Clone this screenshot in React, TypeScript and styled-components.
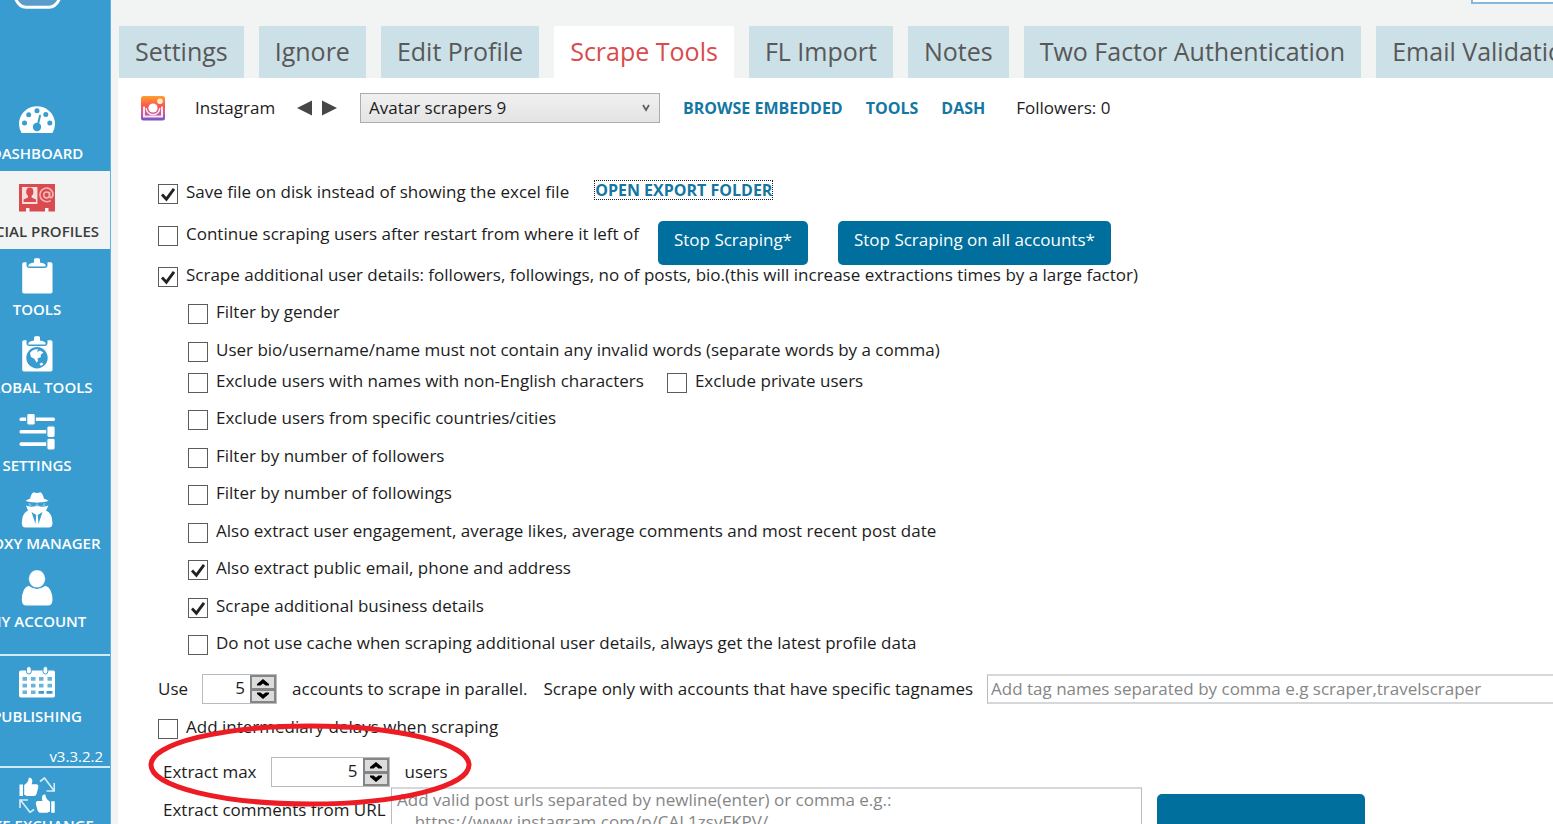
import React, { useState } from "react";
import type { ReactNode } from "react";
import styled, { createGlobalStyle, css } from "styled-components";

const color = {
  rail: "#389cd0",
  railEdge: "#5db4e0",
  page: "#f2f4f4",
  tab: "#cce0e7",
  tabText: "#585858",
  accent: "#d94b4e",
  action: "#006f9e",
  link: "#1477a3",
  text: "#1c1c1c",
  border: "#b9bbc0",
  softBorder: "#d6d7db",
};

const GlobalStyle = createGlobalStyle`
  *, *::before, *::after { box-sizing: border-box; }
  body {
    margin: 0;
    background: ${color.page};
    color: ${color.text};
    font: 17px/24px "Open Sans", "Noto Sans", sans-serif;
  }
  button, input, select, textarea { font: inherit; color: inherit; margin: 0; border-radius: 0; }
`;

/* ---------- shell ---------- */

const Shell = styled.div`
  display: flex;
  height: 100vh;
  overflow: hidden;
`;

const Rail = styled.nav`
  flex: none;
  width: 111px;
  overflow: hidden;
  background: ${color.rail};
  border-right: 1px solid ${color.railEdge};
`;

const RailTrack = styled.div`
  display: flex;
  flex-direction: column;
  width: 148px;
  margin-left: -37px;
`;

const LogoSlot = styled.div`
  display: flex;
  justify-content: center;
  height: 93px;
`;

const RailItem = styled.a<{ $active?: boolean; $tight?: boolean }>`
  display: flex;
  flex-direction: column;
  align-items: center;
  gap: ${(p) => (p.$tight ? 2 : 5)}px;
  height: 78px;
  padding-top: 9px;
  color: ${(p) => (p.$active ? "#3c3c3c" : "#fff")};
  background: ${(p) => (p.$active ? color.page : "transparent")};
  font-size: 15px;
  font-weight: 600;
  line-height: 20px;
  white-space: nowrap;
  text-decoration: none;
  svg { flex: none; }
`;

const RailGroup = styled.div<{ $top: number }>`
  margin-top: ${(p) => p.$top}px;
  border-top: 2px solid #d3eaf5;
`;

const Version = styled.div`
  padding: 12px 8px 0 0;
  color: #fff;
  font-size: 15px;
  line-height: 20px;
  text-align: right;
`;

const Main = styled.main`
  flex: 1;
  min-width: 0;
  overflow: hidden;
  padding-left: 7px;
  display: flex;
  flex-direction: column;
`;

const TopBar = styled.header`
  display: flex;
  flex: none;
  justify-content: flex-end;
  align-items: flex-end;
  height: 26px;
  padding-bottom: 22px;
`;

const TopInput = styled.input`
  width: 82px;
  height: 28px;
  border: 2px solid #88b9dc;
  border-right: 0;
  background: #fff;
`;

const Tabs = styled.div`
  display: flex;
  flex: none;
  gap: 15px;
  height: 52px;
  padding-left: 1px;
`;

const Tab = styled.button<{ $active?: boolean }>`
  flex: none;
  padding: 0 16px 2px;
  border: 0;
  background: ${(p) => (p.$active ? "#fff" : color.tab)};
  color: ${(p) => (p.$active ? color.accent : color.tabText)};
  font-size: 25px;
  line-height: 34px;
  white-space: nowrap;
`;

const Panel = styled.section`
  flex: 1 0 auto;
  background: #fff;
`;

/* ---------- account bar ---------- */

const AccountBar = styled.div`
  display: flex;
  align-items: center;
  height: 60px;
  padding-left: 22px;
  white-space: nowrap;
`;

const Network = styled.span`
  width: 79px;
  margin: 0 23px 0 29px;
`;

const Stepper = styled.div`
  display: flex;
  gap: 10px;
  margin-right: 23px;
`;

const ArrowButton = styled.button`
  display: flex;
  padding: 0;
  border: 0;
  background: none;
`;

const SelectWrap = styled.div`
  position: relative;
  width: 300px;
  margin-right: 23px;
  svg { position: absolute; right: 10px; top: 11px; pointer-events: none; }
`;

const AccountSelect = styled.select`
  display: block;
  width: 100%;
  height: 30px;
  padding: 0 8px;
  appearance: none;
  border: 1px solid #acacac;
  background: linear-gradient(#f0f0f0, #e4e4e4);
`;

const TextLink = styled.a<{ $focused?: boolean }>`
  color: ${color.link};
  font-size: 16px;
  font-weight: 700;
  line-height: 18px;
  text-decoration: none;
  white-space: nowrap;
  ${(p) => p.$focused && css`
    display: block;
    outline: 1px dotted #222;
  `}
`;

const BarLinks = styled.div`
  display: flex;
  gap: 23px;
  margin-right: 31px;
`;

/* ---------- form ---------- */

const Form = styled.form`
  display: flex;
  flex-direction: column;
  padding: 42px 0 0 40px;
`;

const Line = styled.div<{ $height: number }>`
  display: flex;
  align-items: flex-start;
  height: ${(p) => p.$height}px;
  white-space: nowrap;
`;

const CheckLabel = styled.label`
  display: flex;
  gap: 8px;
  line-height: 24px;
`;

const Box = styled.span`
  position: relative;
  flex: none;
  width: 20px;
  height: 20px;
  margin-top: 4px;
  svg { position: absolute; inset: 0; pointer-events: none; }
`;

const BoxInput = styled.input`
  display: block;
  width: 20px;
  height: 20px;
  appearance: none;
  border: 1px solid #5c5c5c;
  background: #fff;
`;

const SubOptions = styled.div`
  padding-left: 30px;
`;

const ExportSlot = styled.div`
  margin: 1px 0 0 26px;
`;

const Actions = styled.div`
  display: flex;
  gap: 30px;
  margin: -1px 0 0 19px;
`;

const ActionButton = styled.button`
  height: 44px;
  padding: 0 16px 6px;
  border: 0;
  border-radius: 5px;
  background: ${color.action};
  color: #fff;
`;

const Field = styled.div<{ $top: number; $indent?: number }>`
  position: relative;
  display: flex;
  align-items: center;
  height: 30px;
  margin-top: ${(p) => p.$top}px;
  padding-left: ${(p) => p.$indent ?? 0}px;
  white-space: nowrap;
`;

const NumberBox = styled.div<{ $width: number }>`
  display: flex;
  width: ${(p) => p.$width}px;
  height: 30px;
  margin: 0 15px 0 14px;
  border: 1px solid ${color.border};
  background: #fff;
`;

const NumberInput = styled.input`
  flex: 1;
  min-width: 0;
  padding: 0 5px 2px 0;
  border: 0;
  background: none;
  text-align: right;
  appearance: textfield;
  &::-webkit-inner-spin-button { appearance: none; }
`;

const SpinColumn = styled.div`
  display: flex;
  flex-direction: column;
  width: 26px;
`;

const SpinButton = styled.button`
  display: flex;
  flex: 1;
  align-items: center;
  justify-content: center;
  padding: 0;
  border: 2px solid #858585;
  background: #dcdcdc;
  & + & { border-top-width: 1px; }
`;

const TagLabel = styled.label`
  margin: 0 14px 0 16px;
`;

const TagInput = styled.input`
  flex: 1;
  min-width: 0;
  height: 30px;
  padding: 0 3px 2px;
  border: 2px solid ${color.softBorder};
  border-width: 2px 0 2px 1px;
  border-left-color: ${color.border};
  &::placeholder { color: #868686; opacity: 1; }
`;

const CommentsRow = styled.div`
  display: flex;
  align-items: flex-start;
  padding-left: 5px;
  white-space: nowrap;
`;

const CommentsLabel = styled.label`
  width: 228px;
  padding-top: 11px;
`;

const UrlArea = styled.textarea`
  width: 751px;
  height: 90px;
  margin-right: 15px;
  padding: 0 5px;
  resize: none;
  border: 1px solid ${color.border};
  border-top: 2px solid ${color.softBorder};
  line-height: 22px;
  &::placeholder { color: #868686; opacity: 1; }
`;

const WideAction = styled(ActionButton)`
  width: 208px;
  margin-top: 7px;
`;

const Highlight = styled.svg`
  position: absolute;
  left: -11px;
  top: -36px;
  pointer-events: none;
`;

/* ---------- icons ---------- */

const Icon = ({ children }: { children: ReactNode }) => (
  <svg width="36" height="36" viewBox="0 0 36 36" fill="#fff" aria-hidden="true">{children}</svg>
);

const DashboardIcon = () => (
  <Icon>
    <path d="M2.6 31A18 17.6 0 1 1 33.4 31Z" />
    <g fill={color.rail}>
      <circle cx="5.5" cy="21" r="2.5" /><circle cx="9.7" cy="12.7" r="2.5" />
      <circle cx="18" cy="8.8" r="2.5" /><circle cx="26.8" cy="12.5" r="2.5" />
      <circle cx="30.8" cy="21" r="2.5" /><circle cx="18" cy="25" r="4.2" />
    </g>
    <path d="M18.6 24L21 13.8" stroke={color.rail} strokeWidth="2" strokeLinecap="round" />
  </Icon>
);

const ProfilesIcon = () => (
  <Icon>
    <path fill={color.accent} d="M0 4H36V31.5H29.5V28H26V31.5H10.5V28H7V31.5H0Z" />
    <path fill="#f7dede" d="M3 7H18.4V24H3Z" />
    <ellipse cx="10.8" cy="11.8" rx="3.6" ry="4.3" fill={color.accent} />
    <path fill={color.accent} d="M9 14H12.6V17.5L17 19.5V22H4.6V19.5L9 17.5Z" />
    <g fill="none" stroke="#f2b9ba" strokeWidth="1.5">
      <circle cx="27.6" cy="15" r="2.9" />
      <path d="M30.6 11.8V16.6Q31.2 18.5 33 17.2Q35 14.5 33.2 11.3Q30.5 7.6 26.3 8.2Q21.2 9.5 20.9 14.8Q21.3 20.5 26.8 21.6Q29.5 21.9 31.7 20.7" />
    </g>
  </Icon>
);

const Clipboard = () => (
  <>
    <rect x="3.2" y="4.3" width="30.3" height="31.2" rx="1.8" />
    <path fill={color.rail} d="M7.5 4H28.5V7Q28.5 10 25.5 10H10.5Q7.5 10 7.5 7Z" />
    <path d="M9.3 8.4Q9.3 5.5 12.8 5L15 4.5V1.5Q15 0 18 0T21 1.5V4.5L23.2 5Q26.7 5.5 26.7 8.4Z" />
  </>
);

const ToolsIcon = () => <Icon><Clipboard /></Icon>;

const GlobalToolsIcon = () => (
  <Icon>
    <Clipboard />
    <circle cx="18" cy="21.7" r="10.7" fill={color.rail} />
    <path d="M11 17Q14 12.8 19 13.3L18 16L21 14.5L24.5 16.5L21.5 19L22 21L18.5 22.5L19 25L17.5 26.5L15.5 23L12 21Z" />
    <path d="M20.5 28L22.5 26.5L24.5 28L22 30Z" />
  </Icon>
);

const SettingsIcon = () => (
  <Icon>
    <rect x=".5" y="3.4" width="35.5" height="3.6" rx="1.6" />
    <rect x=".5" y="15.9" width="35" height="3.6" rx="1.6" />
    <rect x=".5" y="28.3" width="35" height="3.6" rx="1.6" />
    <g stroke={color.rail} strokeWidth="1.2">
      <rect x="7.7" y="-.6" width="8.6" height="11.8" rx="2" />
      <rect x="27.8" y="11.8" width="8.4" height="11.8" rx="2" />
      <rect x="27.8" y="24.2" width="8.4" height="11.8" rx="2" />
    </g>
  </Icon>
);

const ProxyIcon = () => (
  <Icon>
    <path d="M6.5 9Q9 7.3 11 6.8Q12 2 14.5 .2Q16.3 1 18 1T21.5 .2Q24 2 25 6.8Q27 7.3 29.7 9Q24 10.8 18 10.8T6.5 9Z" />
    <path d="M9.5 11Q18 12.6 26.5 11L26 14.5H10Z" opacity=".35" />
    <path d="M7 13.5L12 15L18 14L24 15L29.5 13.5L27 18.5Q33.3 21 33.5 31Q33.5 35.6 29.5 35.6H6.5Q2.8 35.6 2.8 31Q3 21 9 18.5Z" />
    <path fill={color.rail} d="M11.5 10.8H17V13L14.5 14.2L12 13ZM19 10.8H24.5L24 13L21.5 14.2L19 13ZM12.5 20L17.2 23L16.5 32ZM23.5 20L18.8 23L19.5 32Z" />
  </Icon>
);

const AccountIcon = () => (
  <Icon>
    <path d="M9.5 15.8Q18 22 26.5 15.8Q33.3 18 33.5 30Q33.5 35.6 28.5 35.6H7.5Q2.8 35.6 2.8 30Q3 18 9.5 15.8Z" />
    <ellipse cx="18" cy="8.8" rx="8.4" ry="9" stroke={color.rail} strokeWidth=".6" />
  </Icon>
);

const CalendarIcon = () => (
  <Icon>
    <rect x="0" y="5.5" width="36" height="27" rx="1.8" />
    <g stroke={color.rail} strokeWidth="1">
      <rect x="7.5" y="1.5" width="4.8" height="7.5" rx="2.4" />
      <rect x="24" y="1.5" width="4.8" height="7.5" rx="2.4" />
    </g>
    <path fill="#69b4dc" d="M3.5 12H8V15.7H3.5ZM12 12H16.5V15.7H12ZM20 12H24.5V15.7H20ZM28.5 12H33V15.7H28.5ZM3.5 18.7H8V22.4H3.5ZM12 18.7H16.5V22.4H12ZM20 18.7H24.5V22.4H20ZM28.5 18.7H33V22.4H28.5ZM3.5 25.5H8V29H3.5ZM12 25.5H16.5V29H12Z" />
    <path fill={color.rail} d="M19.5 26H25V28.7H19.5ZM27.5 26H33.5V28.7H27.5Z" />
  </Icon>
);

const ExchangeIcon = () => (
  <Icon>
    <path d="M.5 7.5H4V19H.5ZM5.2 8Q9.5 5.5 9.8 .8Q13.5 .3 13.3 4.8L12.7 7.3H18Q20 8 19.3 10.5L17.5 17Q17 19 15 19H8L5.2 17.8Z" />
    <path d="M35.7 24.3H32.2V35.8H35.7ZM31 24.8Q26.7 22.3 26.4 17.6Q22.7 17.1 22.9 21.6L23.5 24.1H18.2Q16.2 24.8 16.9 27.3L18.7 33.8Q19.2 35.8 21.2 35.8H28.2L31 34.6Z" />
    <path fill="none" stroke="#d9edf7" strokeWidth="1.6" d="M21 4.5L25.5 1L34.5 13M35.3 6V14H27.5M15 32.5L11 35.3L1.8 23.5M1 31V23H9" />
  </Icon>
);

const Logo = () => (
  <svg width="56" height="10" viewBox="0 0 56 10" aria-hidden="true">
    <path d="M5 -5Q9 7.2 17 7.2H40Q48 7.2 52 -5" fill="#5a9ccb" stroke="#fff" strokeWidth="3" />
  </svg>
);

const InstagramIcon = () => (
  <svg width="26" height="26" viewBox="0 0 26 26" aria-hidden="true">
    <defs>
      <linearGradient id="insta" x1="0" y1="0" x2="0" y2="1">
        <stop offset="0" stopColor="#fda02c" /><stop offset=".4" stopColor="#f9574f" />
        <stop offset=".7" stopColor="#cf5a9c" /><stop offset="1" stopColor="#6b57c9" />
      </linearGradient>
    </defs>
    <rect x="1" y="1" width="24" height="24.5" rx="2.5" fill="url(#insta)" />
    <path d="M4 11.5V21.5H22V11.5" fill="none" stroke="#fbe6ee" strokeWidth="2" />
    <path d="M6.2 13A6.8 6.8 0 0 0 19.8 13" fill="none" stroke="#fbe6ee" strokeWidth="1.4" />
    <circle cx="13" cy="13" r="4.6" fill="#fff" />
    <circle cx="20" cy="6.3" r="2.8" fill="#ffe9d2" />
  </svg>
);

const Triangle = ({ left }: { left?: boolean }) => (
  <svg width="15" height="16" viewBox="0 0 15 16" fill="#474747" aria-hidden="true">
    <path d={left ? "M15 .5V15.5L0 8Z" : "M0 .5V15.5L15 8Z"} />
  </svg>
);

/* ---------- controls ---------- */

const Check = ({ label, on = false }: { label: string; on?: boolean }) => {
  const [checked, setChecked] = useState(on);
  return (
    <CheckLabel>
      <Box>
        <BoxInput type="checkbox" checked={checked} onChange={(e) => setChecked(e.target.checked)} />
        {checked && (
          <svg width="20" height="20" viewBox="0 0 20 20" aria-hidden="true">
            <path d="M4 10.5L8.4 15.2L16 4.8" fill="none" stroke="#222" strokeWidth="2.8" />
          </svg>
        )}
      </Box>
      {label}
    </CheckLabel>
  );
};

const NumberField = ({ id, width }: { id: string; width: number }) => {
  const [value, setValue] = useState(5);
  return (
    <NumberBox $width={width}>
      <NumberInput id={id} type="number" value={value} onChange={(e) => setValue(Number(e.target.value))} />
      <SpinColumn>
        <SpinButton type="button" aria-label="Increase" onClick={() => setValue(value + 1)}>
          <svg width="12" height="7" viewBox="0 0 12 7"><path d="M0 6.5V5L6 0L12 5V6.5H8.500L6 4.500L3.500 6.500Z" /></svg>
        </SpinButton>
        <SpinButton type="button" aria-label="Decrease" onClick={() => setValue(value - 1)}>
          <svg width="12" height="7" viewBox="0 0 12 7"><path d="M0 .5V2L6 7L12 2V.5H8.5L6 2.5L3.5 .5Z" /></svg>
        </SpinButton>
      </SpinColumn>
    </NumberBox>
  );
};

const railItems = [
  { label: "DASHBOARD", icon: <DashboardIcon /> },
  { label: "SOCIAL PROFILES", icon: <ProfilesIcon />, active: true },
  { label: "TOOLS", icon: <ToolsIcon /> },
  { label: "GLOBAL TOOLS", icon: <GlobalToolsIcon /> },
  { label: "SETTINGS", icon: <SettingsIcon /> },
  { label: "PROXY MANAGER", icon: <ProxyIcon /> },
  { label: "MY ACCOUNT", icon: <AccountIcon /> },
];

const tabs = ["Settings", "Ignore", "Edit Profile", "Scrape Tools", "FL Import", "Notes", "Two Factor Authentication", "Email Validation"];

const filters: { label: string; height: number; on?: boolean; second?: string }[] = [
  { label: "Filter by gender", height: 38 },
  { label: "User bio/username/name must not contain any invalid words (separate words by a comma)", height: 31 },
  { label: "Exclude users with names with non-English characters", height: 37, second: "Exclude private users" },
  { label: "Exclude users from specific countries/cities", height: 38 },
  { label: "Filter by number of followers", height: 37 },
  { label: "Filter by number of followings", height: 38 },
  { label: "Also extract user engagement, average likes, average comments and most recent post date", height: 37 },
  { label: "Also extract public email, phone and address", height: 38, on: true },
  { label: "Scrape additional business details", height: 37, on: true },
  { label: "Do not use cache when scraping additional user details, always get the latest profile data", height: 38 },
];

const Second = styled.div`
  margin-left: 23px;
`;

export default function App() {
  const [tab, setTab] = useState("Scrape Tools");
  return (
    <>
      <GlobalStyle />
      <Shell>
        <Rail>
          <RailTrack>
            <LogoSlot><Logo /></LogoSlot>
            {railItems.map((item) => (
              <RailItem key={item.label} href="#" $active={item.active}>{item.icon}{item.label}</RailItem>
            ))}
            <RailGroup $top={15}>
              <RailItem href="#"><CalendarIcon />PUBLISHING</RailItem>
              <Version>v3.3.2.2</Version>
            </RailGroup>
            <RailGroup $top={0}>
              <RailItem href="#" $tight><ExchangeIcon />LIKE EXCHANGE</RailItem>
            </RailGroup>
          </RailTrack>
        </Rail>
        <Main>
          <TopBar><TopInput aria-label="Search" /></TopBar>
          <Tabs role="tablist">
            {tabs.map((name) => (
              <Tab key={name} type="button" role="tab" aria-selected={tab === name} $active={tab === name} onClick={() => setTab(name)}>{name}</Tab>
            ))}
          </Tabs>
          <Panel>
            <AccountBar>
              <InstagramIcon />
              <Network>Instagram</Network>
              <Stepper>
                <ArrowButton type="button" aria-label="Previous account"><Triangle left /></ArrowButton>
                <ArrowButton type="button" aria-label="Next account"><Triangle /></ArrowButton>
              </Stepper>
              <SelectWrap>
                <AccountSelect aria-label="Account"><option>Avatar scrapers 9</option></AccountSelect>
                <svg width="8" height="8" viewBox="0 0 8 8"><path d="M1 1L4 6L7 1" fill="none" stroke="#606060" strokeWidth="1.8" /></svg>
              </SelectWrap>
              <BarLinks>
                <TextLink href="#">BROWSE EMBEDDED</TextLink>
                <TextLink href="#">TOOLS</TextLink>
                <TextLink href="#">DASH</TextLink>
              </BarLinks>
              <span>Followers: 0</span>
            </AccountBar>
            <Form>
              <Line $height={42}>
                <Check label="Save file on disk instead of showing the excel file" on />
                <ExportSlot><TextLink href="#" $focused>OPEN EXPORT FOLDER</TextLink></ExportSlot>
              </Line>
              <Line $height={41}>
                <Check label="Continue scraping users after restart from where it left of" />
                <Actions>
                  <ActionButton type="button">Stop Scraping*</ActionButton>
                  <ActionButton type="button">Stop Scraping on all accounts*</ActionButton>
                </Actions>
              </Line>
              <Line $height={37}>
                <Check label="Scrape additional user details: followers, followings, no of posts, bio.(this will increase extractions times by a large factor)" on />
              </Line>
              <SubOptions>
                {filters.map((f) => (
                  <Line key={f.label} $height={f.height}>
                    <Check label={f.label} on={f.on} />
                    {f.second && <Second><Check label={f.second} /></Second>}
                  </Line>
                ))}
              </SubOptions>
              <Field $top={5}>
                <label htmlFor="parallel">Use</label>
                <NumberField id="parallel" width={75} />
                <span>accounts to scrape in parallel.</span>
                <TagLabel htmlFor="tags">Scrape only with accounts that have specific tagnames</TagLabel>
                <TagInput id="tags" placeholder="Add tag names separated by comma e.g scraper,travelscraper" />
              </Field>
              <Field $top={8}>
                <Check label="Add intermediary delays when scraping" />
              </Field>
              <Field $top={15} $indent={5}>
                <label htmlFor="max">Extract max</label>
                <NumberField id="max" width={119} />
                <span>users</span>
                <Highlight width="326" height="88" viewBox="0 0 326 88" aria-hidden="true">
                  <ellipse cx="163" cy="44" rx="159" ry="39" fill="none" stroke="#ed1c24" strokeWidth="5" />
                </Highlight>
              </Field>
              <CommentsRow>
                <CommentsLabel htmlFor="urls">Extract comments from URL</CommentsLabel>
                <UrlArea id="urls" placeholder={"Add valid post urls separated by newline(enter) or comma e.g.:\n    https://www.instagram.com/p/CAL1zsyFKPV/"} />
                <WideAction type="button" aria-label="Extract comments" />
              </CommentsRow>
            </Form>
          </Panel>
        </Main>
      </Shell>
    </>
  );
}
